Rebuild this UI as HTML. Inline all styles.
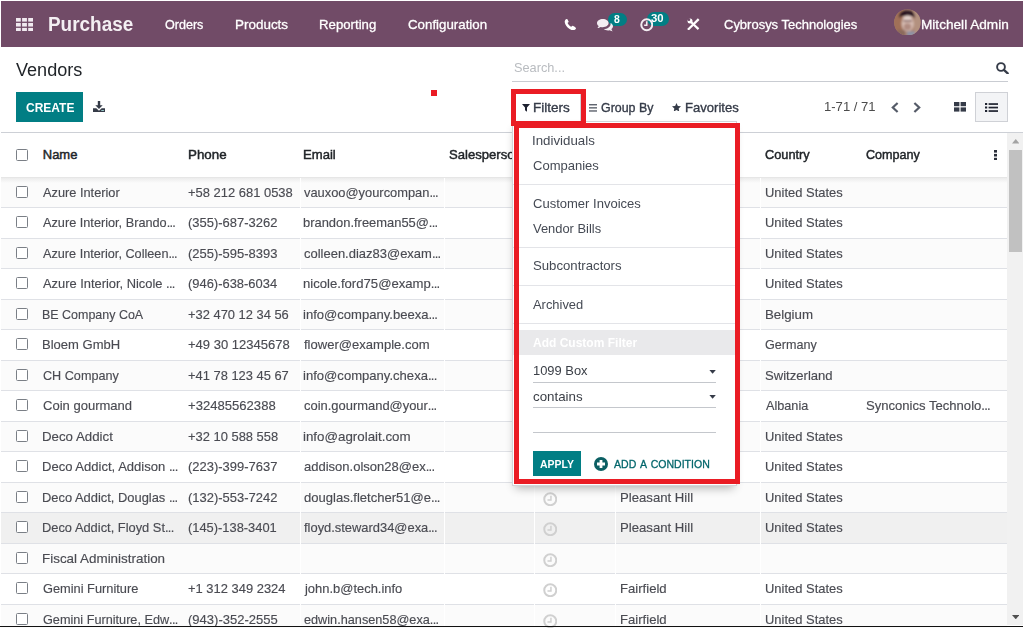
<!DOCTYPE html>
<html>
<head>
<meta charset="utf-8">
<title>Vendors</title>
<style>
*{box-sizing:border-box;margin:0;padding:0}
html,body{width:1024px;height:628px;overflow:hidden;background:#fff}
body{font-family:"Liberation Sans",sans-serif;font-size:13px;color:#4c4c4c;position:relative}
.t{position:absolute;transform-origin:0 0;white-space:nowrap;font-family:"Liberation Sans",sans-serif}
.a{position:absolute}
#nav{position:absolute;left:1px;top:1px;width:1021.5px;height:45.5px;background:#714b67}
.create{position:absolute;left:16px;top:92px;width:67px;height:30px;background:#017e84}
.sline{position:absolute;left:512px;top:81px;width:496px;height:1px;background:#c9ccd2}
.cpline{position:absolute;left:1px;top:132px;width:1022px;height:1px;background:#cdd0d6}
.hdr{position:absolute;left:1px;top:133px;width:1006px;height:45px;background:#fff;border-bottom:1px solid #e6e6e6}
.hshadow{position:absolute;left:1px;top:178px;width:1006px;height:5px;background:linear-gradient(#ececec,rgba(240,240,240,0));z-index:2}
.row{position:absolute;left:1px;width:1006px;border-bottom:1px solid #dfe1e6;background:#fff}
.row.odd{background:#fbfbfb}
.row.hov{background:#f0f0f0}
.cb{position:absolute;left:15px;top:8px;width:12.3px;height:12.3px;border:1.2px solid #7a7f86;border-radius:1.5px;background:#fff}
.clk{position:absolute;left:542.5px;top:8.5px;width:13.4px;height:13.4px;border:1.9px solid #cbcbcb;border-radius:50%}
.clk:after{content:"";position:absolute;left:1.6px;top:1.4px;width:3.6px;height:4px;border-right:1.6px solid #cbcbcb;border-bottom:1.6px solid #cbcbcb}
.vsep{position:absolute;top:178px;width:1px;height:448px;background:#fff;z-index:3}
#sb{position:absolute;left:1007px;top:133px;width:15.6px;height:491.6px;background:#f1f1f1;z-index:20}
#sb .thumb{position:absolute;left:2px;top:17px;width:12.6px;height:102px;background:#c1c1c1}
#botline{position:absolute;left:0;top:625.6px;width:1023px;height:1.4px;background:#111;z-index:30}
#dd{position:absolute;left:512px;top:120.6px;width:225px;height:365px;background:#fff;border:1px solid #d2d4d8;box-shadow:0 5px 9px -3px rgba(0,0,0,.3);z-index:4}
.sep{position:absolute;left:513px;width:223px;height:1px;background:#e3e4e8;z-index:5}
.uline{position:absolute;left:533px;width:183px;height:1px;background:#c4c7cc;z-index:5}
.red{position:absolute;border:5px solid #ea1c24;z-index:10}
</style>
</head>
<body>
<div id="nav"></div>
<!-- apps icon -->
<svg class="a" style="left:16px;top:17.5px;z-index:5" width="17" height="13.5" viewBox="0 0 17 13.5"><g fill="#f1eaf0"><rect x="0" y="0" width="4.8" height="3.6"/><rect x="6.1" y="0" width="4.8" height="3.6"/><rect x="12.2" y="0" width="4.8" height="3.6"/><rect x="0" y="4.95" width="4.8" height="3.6"/><rect x="6.1" y="4.95" width="4.8" height="3.6"/><rect x="12.2" y="4.95" width="4.8" height="3.6"/><rect x="0" y="9.9" width="4.8" height="3.6"/><rect x="6.1" y="9.9" width="4.8" height="3.6"/><rect x="12.2" y="9.9" width="4.8" height="3.6"/></g></svg>
<!-- phone -->
<svg class="a" style="left:564px;top:18.5px;z-index:5" width="12.5" height="11.5" viewBox="0 0 14 14"><path fill="#fff" d="M14 10.9c0 .3-.1.8-.2 1.100-.3.700-1.500 1.400-2.600 1.600C9 14 6.300 12.800 3.800 10.300 1.300 7.800 0 5 .3 2.800.5 1.700 1.200.5 1.900.2 2.300.1 2.700 0 3 0c.2 0 .4.200.5.400L5 3.100c.2.400-.3.900-.7 1.200-.4.300-.6.600-.4 1 .9 1.700 2.300 3.100 4 4 .4.200.7 0 1-.4.300-.4.800-.9 1.200-.7l2.700 1.500c.2.100.4.300.4.500z"/></svg>
<!-- comments -->
<svg class="a" style="left:597px;top:19px;z-index:5" width="16" height="12.5" viewBox="0 0 16 12.5"><g fill="#f3edf2"><path d="M5.800 0C2.600 0 0 1.900 0 4.200c0 1.100.6 2.200 1.700 2.900-.2.800-.7 1.500-1.300 2 .1 0 2-.1 3.300-1.100.7.200 1.400.3 2.100.3 3.200 0 5.800-1.900 5.800-4.200C11.600 1.900 9 0 5.800 0z"/><path d="M14.400 10c1-.7 1.600-1.600 1.600-2.700 0-1.400-1-2.600-2.500-3.300.1.300.1.600.1.900 0 2.800-3.100 5-6.900 5.200 1 .9 2.600 1.400 4.300 1.400.6 0 1.200-.1 1.800-.2 1.100.8 2.700 1.100 2.900 1.100-.6-.6-1.100-1.600-1.300-2.400z"/></g></svg>
<div class="a" style="left:607.5px;top:13px;width:19px;height:13px;border-radius:7px;background:#017e84"></div>
<!-- clock activity -->
<svg class="a" style="left:639.5px;top:18px;z-index:5" width="13.5" height="13.5" viewBox="0 0 13.5 13.5"><circle cx="6.750" cy="6.750" r="5.500" fill="none" stroke="#f3edf2" stroke-width="2"/><path d="M6.750 3.200v4h-2.600" fill="none" stroke="#f3edf2" stroke-width="1.600"/></svg>
<div class="a" style="left:646.5px;top:11.5px;width:22px;height:14px;border-radius:7px;background:#017e84"></div>
<!-- studio / tools -->
<svg class="a" style="left:686.500px;top:17.700px;z-index:5" width="13" height="12.500" viewBox="0 0 13 12.500"><g stroke="#fff" stroke-width="2.300" fill="none"><path d="M0.900 11.700L11.700 1.100"/><path d="M4 4L11.500 11.100" stroke-width="2.200"/></g><circle cx="3" cy="2.900" r="2.500" fill="#fff"/><circle cx="1.900" cy="1.700" r="1.350" fill="#714b67"/></svg>
<!-- avatar -->
<svg class="a" style="left:894.2px;top:8.700px;z-index:5" width="26.800" height="26.800" viewBox="0 0 27 27"><defs><clipPath id="av"><circle cx="13.500" cy="13.500" r="13.300"/></clipPath><filter id="avb" x="-20%" y="-20%" width="140%" height="140%"><feGaussianBlur stdDeviation="0.900"/></filter></defs><g clip-path="url(#av)"><rect width="27" height="27" fill="#a8806e"/><g filter="url(#avb)"><rect x="-2" y="-2" width="11" height="31" fill="#a07058"/><rect x="20" y="-2" width="9" height="31" fill="#b3917f"/><path d="M5 9C5 3 9 1 13 1.500 18 1 21.500 4 21 9.500L19 7 8 7z" fill="#2a1820"/><ellipse cx="13.800" cy="14.500" rx="6.200" ry="8.200" fill="#d6bcb2"/><ellipse cx="13.600" cy="18" rx="3.800" ry="3.600" fill="#b08c82"/><rect x="9.500" y="11.200" width="8.500" height="1.500" fill="#7a5a5a"/><ellipse cx="13.600" cy="9" rx="4" ry="2" fill="#e4d2cc"/><rect x="13" y="22.500" width="8" height="5" fill="#8f93a6"/><rect x="3" y="21" width="8" height="7" fill="#8a6a5c"/></g></g></svg>

<div class="create"></div>
<div class="a" style="left:431px;top:90px;width:6px;height:6px;background:#ea1c24"></div>
<!-- download -->
<svg class="a" style="left:93px;top:100.800px" width="12" height="11.200" viewBox="0 0 12 11.200"><g fill="#353b48"><path d="M4.800 0h2.400v4.200h2.500L6 8 2.300 4.200h2.500z"/><path d="M0 7.200h3.300L6 9.800l2.700-2.600H12v4H0z"/></g><rect x="8.300" y="9" width="2.600" height="1" fill="#9cc"/></svg>
<div class="sline"></div>
<!-- search icon -->
<svg class="a" style="left:996px;top:62.400px" width="12.600" height="12" viewBox="0 0 12.600 12"><circle cx="5" cy="5" r="3.900" fill="none" stroke="#353b48" stroke-width="1.900"/><path d="M7.900 7.900l3.800 3.500" stroke="#353b48" stroke-width="2.300" stroke-linecap="round"/></svg>
<!-- filters button border -->
<div class="a" style="left:513px;top:92px;width:68px;height:30px;border:1px solid #d2d4d8;border-bottom:none;background:#fff"></div>
<!-- filter icon -->
<svg class="a" style="left:522.200px;top:103.800px;z-index:5" width="8" height="7.800" viewBox="0 0 8 7.800"><path d="M0 0h8L5 3.400v4.400L3 6.200V3.400z" fill="#1d2130"/></svg>
<!-- bars -->
<svg class="a" style="left:588.500px;top:103.500px" width="8.500" height="8" viewBox="0 0 8.500 8"><g fill="#3a404d"><rect y="0.200" width="8.500" height="1.150"/><rect y="3.300" width="8.500" height="1.150"/><rect y="6.400" width="8.500" height="1.150"/></g></svg>
<!-- star -->
<svg class="a" style="left:672.300px;top:102.800px" width="9" height="8.600" viewBox="0 0 10 9.500"><path d="M5 0l1.500 3.200 3.500.4-2.600 2.400.7 3.500L5 7.800 1.900 9.500l.7-3.500L0 3.600l3.500-.4z" fill="#353b48"/></svg>
<!-- chevrons -->
<svg class="a" style="left:890.500px;top:101.500px" width="8" height="11" viewBox="0 0 8 11"><path d="M6.600 1L1.800 5.500 6.600 10" fill="none" stroke="#555b68" stroke-width="2.200"/></svg>
<svg class="a" style="left:912.500px;top:101.500px" width="8" height="11" viewBox="0 0 8 11"><path d="M1.400 1l4.800 4.500L1.400 10" fill="none" stroke="#555b68" stroke-width="2.200"/></svg>
<!-- kanban icon -->
<svg class="a" style="left:954px;top:102px" width="12" height="9.600" viewBox="0 0 12 9.600"><g fill="#353b48"><rect x="0" y="0" width="5.400" height="4.200"/><rect x="6.600" y="0" width="5.400" height="4.200"/><rect x="0" y="5.400" width="5.400" height="4.200"/><rect x="6.600" y="5.400" width="5.400" height="4.200"/></g></svg>
<!-- list button -->
<div class="a" style="left:975px;top:92px;width:33px;height:29.500px;background:#f3f4f6;border:1px solid #cfd1d6"></div>
<svg class="a" style="left:984.500px;top:102.500px" width="13.500" height="9" viewBox="0 0 13.500 9"><g fill="#1f2330"><rect x="0" y="0" width="2.200" height="2"/><rect x="3.600" y="0.200" width="9.900" height="1.700"/><rect x="0" y="3.500" width="2.200" height="2"/><rect x="3.600" y="3.700" width="9.900" height="1.700"/><rect x="0" y="7" width="2.200" height="2"/><rect x="3.600" y="7.200" width="9.900" height="1.700"/></g></svg>
<div class="cpline"></div>

<div class="hdr"><i class="cb" style="top:16px"></i></div>
<!-- kebab -->
<svg class="a" style="left:994px;top:150px;z-index:5" width="3.400" height="10.400" viewBox="0 0 3.400 10.400"><g fill="#2a2e3a"><rect y="0" width="3.400" height="2.600"/><rect y="3.900" width="3.400" height="2.600"/><rect y="7.800" width="3.400" height="2.600"/></g></svg>
<div class="row odd" style="top:178px;height:30px"><i class="cb"></i></div>
<div class="row" style="top:208px;height:31px"><i class="cb"></i></div>
<div class="row odd" style="top:239px;height:30px"><i class="cb"></i></div>
<div class="row" style="top:269px;height:31px"><i class="cb"></i></div>
<div class="row odd" style="top:300px;height:30px"><i class="cb"></i></div>
<div class="row" style="top:330px;height:31px"><i class="cb"></i></div>
<div class="row odd" style="top:361px;height:30px"><i class="cb"></i></div>
<div class="row" style="top:391px;height:31px"><i class="cb"></i></div>
<div class="row odd" style="top:422px;height:30px"><i class="cb"></i></div>
<div class="row" style="top:452px;height:31px"><i class="cb"></i></div>
<div class="row odd" style="top:483px;height:30px"><i class="cb"></i><svg class="a" style="left:541.6px;top:8.5px" width="14.5" height="14.5" viewBox="0 0 14.5 14.5"><circle cx="7.25" cy="7.25" r="6" fill="none" stroke="#d0d0d0" stroke-width="2"/><path d="M7.950 3.700v4.200h-3.500" fill="none" stroke="#d0d0d0" stroke-width="1.500"/></svg></div>
<div class="row hov" style="top:513px;height:31px"><i class="cb"></i><svg class="a" style="left:541.6px;top:8.5px" width="14.5" height="14.5" viewBox="0 0 14.5 14.5"><circle cx="7.25" cy="7.25" r="6" fill="none" stroke="#d0d0d0" stroke-width="2"/><path d="M7.950 3.700v4.200h-3.500" fill="none" stroke="#d0d0d0" stroke-width="1.500"/></svg></div>
<div class="row odd" style="top:544px;height:30px"><i class="cb"></i><svg class="a" style="left:541.6px;top:8.5px" width="14.5" height="14.5" viewBox="0 0 14.5 14.5"><circle cx="7.25" cy="7.25" r="6" fill="none" stroke="#d0d0d0" stroke-width="2"/><path d="M7.950 3.700v4.200h-3.500" fill="none" stroke="#d0d0d0" stroke-width="1.500"/></svg></div>
<div class="row" style="top:574px;height:31px"><i class="cb"></i><svg class="a" style="left:541.6px;top:8.5px" width="14.5" height="14.5" viewBox="0 0 14.5 14.5"><circle cx="7.25" cy="7.25" r="6" fill="none" stroke="#d0d0d0" stroke-width="2"/><path d="M7.950 3.700v4.200h-3.500" fill="none" stroke="#d0d0d0" stroke-width="1.500"/></svg></div>
<div class="row odd" style="top:605px;height:30px"><i class="cb"></i><svg class="a" style="left:541.6px;top:8.5px" width="14.5" height="14.5" viewBox="0 0 14.5 14.5"><circle cx="7.25" cy="7.25" r="6" fill="none" stroke="#d0d0d0" stroke-width="2"/><path d="M7.950 3.700v4.200h-3.500" fill="none" stroke="#d0d0d0" stroke-width="1.500"/></svg></div>
<div class="hshadow"></div>
<div class="vsep" style="left:299.500px"></div>
<div class="vsep" style="left:444px"></div>
<div class="vsep" style="left:534px"></div>
<div class="vsep" style="left:615px"></div>
<div class="vsep" style="left:760px"></div>

<div id="sb"><div class="thumb"></div>
<svg class="a" style="left:4.500px;top:6px" width="7.500" height="4.500" viewBox="0 0 7.500 4.500"><path d="M0 4.500L3.750 0 7.500 4.500z" fill="#a3a3a3"/></svg>
<svg class="a" style="left:4.800px;top:482px" width="7.500" height="4.300" viewBox="0 0 7.500 4.300"><path d="M0 0h7.500L3.750 4.300z" fill="#505050"/></svg>
</div>
<div id="botline"></div>

<div id="dd"></div>
<div class="sep" style="top:184px"></div>
<div class="sep" style="top:247px"></div>
<div class="sep" style="top:285px"></div>
<div class="sep" style="top:323px"></div>
<div class="a" style="left:513px;top:330px;width:223px;height:25px;background:#e9e9eb;z-index:5"></div>
<div class="uline" style="top:382px"></div>
<div class="uline" style="top:407px"></div>
<div class="uline" style="top:432px"></div>
<svg class="a" style="left:708.900px;top:369.900px;z-index:5" width="7.200" height="3.700" viewBox="0 0 7 4"><path d="M0 0h7L3.500 4z" fill="#353b48"/></svg>
<svg class="a" style="left:708.900px;top:394.900px;z-index:5" width="7.200" height="3.700" viewBox="0 0 7 4"><path d="M0 0h7L3.500 4z" fill="#353b48"/></svg>
<div class="a" style="left:533px;top:451px;width:48px;height:24.700px;background:#017e84;z-index:5"></div>
<svg class="a" style="left:593.600px;top:456.800px;z-index:5" width="14" height="14" viewBox="0 0 14 14"><circle cx="7" cy="7" r="7" fill="#0b5f63"/><path d="M7 3v8M3 7h8" stroke="#fff" stroke-width="2.800"/></svg>

<div class="red" style="left:511px;top:89px;width:75px;height:36.500px"></div>
<div class="red" style="left:514px;top:123px;width:226px;height:361px"></div>
<span class="t" style="left:48.32px;top:11.57px;font-size:20px;line-height:25px;color:#f4eff3;z-index:1;transform:scaleX(0.9462);font-weight:bold;">Purchase</span>
<span class="t" style="left:165.03px;top:15.82px;font-size:13.5px;line-height:17px;color:#ffffff;z-index:1;transform:scaleX(0.9309);-webkit-text-stroke:0.3px #fff;">Orders</span>
<span class="t" style="left:235.20px;top:15.82px;font-size:13.5px;line-height:17px;color:#ffffff;z-index:1;transform:scaleX(0.9962);-webkit-text-stroke:0.3px #fff;">Products</span>
<span class="t" style="left:319.32px;top:15.82px;font-size:13.5px;line-height:17px;color:#ffffff;z-index:1;transform:scaleX(0.9780);-webkit-text-stroke:0.3px #fff;">Reporting</span>
<span class="t" style="left:407.71px;top:15.82px;font-size:13.5px;line-height:17px;color:#ffffff;z-index:1;transform:scaleX(0.9848);-webkit-text-stroke:0.3px #fff;">Configuration</span>
<span class="t" style="left:724.02px;top:15.82px;font-size:13.5px;line-height:17px;color:#ffffff;z-index:1;transform:scaleX(0.9619);-webkit-text-stroke:0.3px #fff;">Cybrosys Technologies</span>
<span class="t" style="left:920.99px;top:15.82px;font-size:13.5px;line-height:17px;color:#ffffff;z-index:1;transform:scaleX(1.0088);-webkit-text-stroke:0.3px #fff;">Mitchell Admin</span>
<span class="t" style="left:614.34px;top:13.73px;font-size:10px;line-height:12px;color:#fff;z-index:1;transform:scaleX(1.0400);font-weight:bold;">8</span>
<span class="t" style="left:651.42px;top:12.73px;font-size:10px;line-height:12px;color:#fff;z-index:1;transform:scaleX(1.1333);font-weight:bold;">30</span>
<span class="t" style="left:16.25px;top:58.76px;font-size:18px;line-height:22px;color:#212529;z-index:1;transform:scaleX(1.0038);">Vendors</span>
<span class="t" style="left:25.54px;top:99.50px;font-size:13px;line-height:16px;color:#fff;z-index:1;transform:scaleX(0.9223);font-weight:bold;">CREATE</span>
<span class="t" style="left:513.76px;top:59.50px;font-size:13px;line-height:16px;color:#b9bcc0;z-index:1;transform:scaleX(0.9800);">Search...</span>
<span class="t" style="left:532.96px;top:99.50px;font-size:13px;line-height:16px;color:#353b48;z-index:1;transform:scaleX(1.0382);-webkit-text-stroke:0.35px #353b48;">Filters</span>
<span class="t" style="left:600.52px;top:99.50px;font-size:13px;line-height:16px;color:#353b48;z-index:1;transform:scaleX(0.9541);-webkit-text-stroke:0.35px #353b48;">Group By</span>
<span class="t" style="left:684.50px;top:99.50px;font-size:13px;line-height:16px;color:#353b48;z-index:1;transform:scaleX(1.0048);-webkit-text-stroke:0.35px #353b48;">Favorites</span>
<span class="t" style="left:823.99px;top:98.50px;font-size:13px;line-height:16px;color:#4c4c4c;z-index:1;transform:scaleX(1.0050);">1-71 / 71</span>
<span class="t" style="left:42.75px;top:146.50px;font-size:13px;line-height:16px;color:#212529;z-index:1;transform:scaleX(1.0000);-webkit-text-stroke:0.45px #212529;">Name</span>
<span class="t" style="left:187.73px;top:146.50px;font-size:13px;line-height:16px;color:#212529;z-index:1;transform:scaleX(1.0274);-webkit-text-stroke:0.45px #212529;">Phone</span>
<span class="t" style="left:303.24px;top:146.50px;font-size:13px;line-height:16px;color:#212529;z-index:1;transform:scaleX(1.0080);-webkit-text-stroke:0.45px #212529;">Email</span>
<span class="t" style="left:448.75px;top:146.50px;font-size:13px;line-height:16px;color:#212529;z-index:1;transform:scaleX(1.0070);-webkit-text-stroke:0.45px #212529;">Salesperson</span>
<span class="t" style="left:765.01px;top:146.50px;font-size:13px;line-height:16px;color:#212529;z-index:1;transform:scaleX(0.9834);-webkit-text-stroke:0.45px #212529;">Country</span>
<span class="t" style="left:866.02px;top:146.50px;font-size:13px;line-height:16px;color:#212529;z-index:1;transform:scaleX(0.9683);-webkit-text-stroke:0.45px #212529;">Company</span>
<span class="t" style="left:43.40px;top:184.50px;font-size:13px;line-height:16px;color:#4a4b52;z-index:1;transform:scaleX(0.9833);-webkit-text-stroke:0.15px #4a4b52;">Azure Interior</span>
<span class="t" style="left:188.10px;top:184.50px;font-size:13px;line-height:16px;color:#4a4b52;z-index:1;transform:scaleX(0.9957);-webkit-text-stroke:0.15px #4a4b52;">+58 212 681 0538</span>
<span class="t" style="left:304.00px;top:184.50px;font-size:13px;line-height:16px;color:#4a4b52;z-index:1;transform:scaleX(0.9904);-webkit-text-stroke:0.15px #4a4b52;">vauxoo@yourcompan<span style="letter-spacing:-0.75px">...</span></span>
<span class="t" style="left:764.60px;top:184.50px;font-size:13px;line-height:16px;color:#4a4b52;z-index:1;transform:scaleX(0.9954);-webkit-text-stroke:0.15px #4a4b52;">United States</span>
<span class="t" style="left:43.40px;top:214.50px;font-size:13px;line-height:16px;color:#4a4b52;z-index:1;transform:scaleX(0.9781);-webkit-text-stroke:0.15px #4a4b52;">Azure Interior, Brando<span style="letter-spacing:-0.75px">...</span></span>
<span class="t" style="left:187.85px;top:214.50px;font-size:13px;line-height:16px;color:#4a4b52;z-index:1;transform:scaleX(0.9972);-webkit-text-stroke:0.15px #4a4b52;">(355)-687-3262</span>
<span class="t" style="left:303.25px;top:214.50px;font-size:13px;line-height:16px;color:#4a4b52;z-index:1;transform:scaleX(0.9937);-webkit-text-stroke:0.15px #4a4b52;">brandon.freeman55@<span style="letter-spacing:-0.75px">...</span></span>
<span class="t" style="left:764.60px;top:214.50px;font-size:13px;line-height:16px;color:#4a4b52;z-index:1;transform:scaleX(0.9954);-webkit-text-stroke:0.15px #4a4b52;">United States</span>
<span class="t" style="left:43.40px;top:245.50px;font-size:13px;line-height:16px;color:#4a4b52;z-index:1;transform:scaleX(0.9752);-webkit-text-stroke:0.15px #4a4b52;">Azure Interior, Colleen<span style="letter-spacing:-0.75px">...</span></span>
<span class="t" style="left:187.85px;top:245.50px;font-size:13px;line-height:16px;color:#4a4b52;z-index:1;transform:scaleX(0.9972);-webkit-text-stroke:0.15px #4a4b52;">(255)-595-8393</span>
<span class="t" style="left:303.50px;top:245.50px;font-size:13px;line-height:16px;color:#4a4b52;z-index:1;transform:scaleX(0.9982);-webkit-text-stroke:0.15px #4a4b52;">colleen.diaz83@exam<span style="letter-spacing:-0.75px">...</span></span>
<span class="t" style="left:764.60px;top:245.50px;font-size:13px;line-height:16px;color:#4a4b52;z-index:1;transform:scaleX(0.9954);-webkit-text-stroke:0.15px #4a4b52;">United States</span>
<span class="t" style="left:43.40px;top:275.50px;font-size:13px;line-height:16px;color:#4a4b52;z-index:1;transform:scaleX(0.9902);-webkit-text-stroke:0.15px #4a4b52;">Azure Interior, Nicole <span style="letter-spacing:-0.75px">...</span></span>
<span class="t" style="left:187.85px;top:275.50px;font-size:13px;line-height:16px;color:#4a4b52;z-index:1;transform:scaleX(0.9944);-webkit-text-stroke:0.15px #4a4b52;">(946)-638-6034</span>
<span class="t" style="left:303.24px;top:275.50px;font-size:13px;line-height:16px;color:#4a4b52;z-index:1;transform:scaleX(1.0093);-webkit-text-stroke:0.15px #4a4b52;">nicole.ford75@examp<span style="letter-spacing:-0.75px">...</span></span>
<span class="t" style="left:764.60px;top:275.50px;font-size:13px;line-height:16px;color:#4a4b52;z-index:1;transform:scaleX(0.9954);-webkit-text-stroke:0.15px #4a4b52;">United States</span>
<span class="t" style="left:42.44px;top:306.50px;font-size:13px;line-height:16px;color:#4a4b52;z-index:1;transform:scaleX(0.9589);-webkit-text-stroke:0.15px #4a4b52;">BE Company CoA</span>
<span class="t" style="left:188.10px;top:306.50px;font-size:13px;line-height:16px;color:#4a4b52;z-index:1;transform:scaleX(0.9920);-webkit-text-stroke:0.15px #4a4b52;">+32 470 12 34 56</span>
<span class="t" style="left:303.25px;top:306.50px;font-size:13px;line-height:16px;color:#4a4b52;z-index:1;transform:scaleX(1.0045);-webkit-text-stroke:0.15px #4a4b52;">info@company.beexa<span style="letter-spacing:-0.75px">...</span></span>
<span class="t" style="left:764.58px;top:306.50px;font-size:13px;line-height:16px;color:#4a4b52;z-index:1;transform:scaleX(1.0232);-webkit-text-stroke:0.15px #4a4b52;">Belgium</span>
<span class="t" style="left:42.40px;top:336.50px;font-size:13px;line-height:16px;color:#4a4b52;z-index:1;transform:scaleX(1.0013);-webkit-text-stroke:0.15px #4a4b52;">Bloem GmbH</span>
<span class="t" style="left:188.10px;top:336.50px;font-size:13px;line-height:16px;color:#4a4b52;z-index:1;transform:scaleX(1.0015);-webkit-text-stroke:0.15px #4a4b52;">+49 30 12345678</span>
<span class="t" style="left:304.00px;top:336.50px;font-size:13px;line-height:16px;color:#4a4b52;z-index:1;transform:scaleX(1.0032);-webkit-text-stroke:0.15px #4a4b52;">flower@example.com</span>
<span class="t" style="left:765.12px;top:336.50px;font-size:13px;line-height:16px;color:#4a4b52;z-index:1;transform:scaleX(0.9679);-webkit-text-stroke:0.15px #4a4b52;">Germany</span>
<span class="t" style="left:42.91px;top:367.50px;font-size:13px;line-height:16px;color:#4a4b52;z-index:1;transform:scaleX(0.9716);-webkit-text-stroke:0.15px #4a4b52;">CH Company</span>
<span class="t" style="left:188.10px;top:367.50px;font-size:13px;line-height:16px;color:#4a4b52;z-index:1;transform:scaleX(0.9920);-webkit-text-stroke:0.15px #4a4b52;">+41 78 123 45 67</span>
<span class="t" style="left:303.25px;top:367.50px;font-size:13px;line-height:16px;color:#4a4b52;z-index:1;transform:scaleX(1.0057);-webkit-text-stroke:0.15px #4a4b52;">info@company.chexa<span style="letter-spacing:-0.75px">...</span></span>
<span class="t" style="left:765.10px;top:367.50px;font-size:13px;line-height:16px;color:#4a4b52;z-index:1;transform:scaleX(1.0061);-webkit-text-stroke:0.15px #4a4b52;">Switzerland</span>
<span class="t" style="left:42.90px;top:397.50px;font-size:13px;line-height:16px;color:#4a4b52;z-index:1;transform:scaleX(1.0017);-webkit-text-stroke:0.15px #4a4b52;">Coin gourmand</span>
<span class="t" style="left:188.10px;top:397.50px;font-size:13px;line-height:16px;color:#4a4b52;z-index:1;transform:scaleX(1.0064);-webkit-text-stroke:0.15px #4a4b52;">+32485562388</span>
<span class="t" style="left:303.50px;top:397.50px;font-size:13px;line-height:16px;color:#4a4b52;z-index:1;transform:scaleX(0.9951);-webkit-text-stroke:0.15px #4a4b52;">coin.gourmand@your<span style="letter-spacing:-0.75px">...</span></span>
<span class="t" style="left:765.60px;top:397.50px;font-size:13px;line-height:16px;color:#4a4b52;z-index:1;transform:scaleX(0.9747);-webkit-text-stroke:0.15px #4a4b52;">Albania</span>
<span class="t" style="left:865.50px;top:397.50px;font-size:13px;line-height:16px;color:#4a4b52;z-index:1;transform:scaleX(1.0057);-webkit-text-stroke:0.15px #4a4b52;">Synconics Technolo<span style="letter-spacing:-0.75px">...</span></span>
<span class="t" style="left:42.38px;top:428.50px;font-size:13px;line-height:16px;color:#4a4b52;z-index:1;transform:scaleX(1.0212);-webkit-text-stroke:0.15px #4a4b52;">Deco Addict</span>
<span class="t" style="left:188.10px;top:428.50px;font-size:13px;line-height:16px;color:#4a4b52;z-index:1;transform:scaleX(0.9939);-webkit-text-stroke:0.15px #4a4b52;">+32 10 588 558</span>
<span class="t" style="left:303.23px;top:428.50px;font-size:13px;line-height:16px;color:#4a4b52;z-index:1;transform:scaleX(1.0251);-webkit-text-stroke:0.15px #4a4b52;">info@agrolait.com</span>
<span class="t" style="left:764.60px;top:428.50px;font-size:13px;line-height:16px;color:#4a4b52;z-index:1;transform:scaleX(0.9954);-webkit-text-stroke:0.15px #4a4b52;">United States</span>
<span class="t" style="left:42.40px;top:458.50px;font-size:13px;line-height:16px;color:#4a4b52;z-index:1;transform:scaleX(1.0034);-webkit-text-stroke:0.15px #4a4b52;">Deco Addict, Addison <span style="letter-spacing:-0.75px">...</span></span>
<span class="t" style="left:187.85px;top:458.50px;font-size:13px;line-height:16px;color:#4a4b52;z-index:1;transform:scaleX(0.9972);-webkit-text-stroke:0.15px #4a4b52;">(223)-399-7637</span>
<span class="t" style="left:303.50px;top:458.50px;font-size:13px;line-height:16px;color:#4a4b52;z-index:1;transform:scaleX(1.0008);-webkit-text-stroke:0.15px #4a4b52;">addison.olson28@ex<span style="letter-spacing:-0.75px">...</span></span>
<span class="t" style="left:764.60px;top:458.50px;font-size:13px;line-height:16px;color:#4a4b52;z-index:1;transform:scaleX(0.9954);-webkit-text-stroke:0.15px #4a4b52;">United States</span>
<span class="t" style="left:42.41px;top:489.50px;font-size:13px;line-height:16px;color:#4a4b52;z-index:1;transform:scaleX(0.9922);-webkit-text-stroke:0.15px #4a4b52;">Deco Addict, Douglas <span style="letter-spacing:-0.75px">...</span></span>
<span class="t" style="left:187.85px;top:489.50px;font-size:13px;line-height:16px;color:#4a4b52;z-index:1;transform:scaleX(0.9972);-webkit-text-stroke:0.15px #4a4b52;">(132)-553-7242</span>
<span class="t" style="left:303.50px;top:489.50px;font-size:13px;line-height:16px;color:#4a4b52;z-index:1;transform:scaleX(1.0030);-webkit-text-stroke:0.15px #4a4b52;">douglas.fletcher51@e<span style="letter-spacing:-0.75px">...</span></span>
<span class="t" style="left:619.69px;top:489.50px;font-size:13px;line-height:16px;color:#4a4b52;z-index:1;transform:scaleX(1.0113);-webkit-text-stroke:0.15px #4a4b52;">Pleasant Hill</span>
<span class="t" style="left:764.60px;top:489.50px;font-size:13px;line-height:16px;color:#4a4b52;z-index:1;transform:scaleX(0.9954);-webkit-text-stroke:0.15px #4a4b52;">United States</span>
<span class="t" style="left:42.41px;top:519.50px;font-size:13px;line-height:16px;color:#4a4b52;z-index:1;transform:scaleX(0.9894);-webkit-text-stroke:0.15px #4a4b52;">Deco Addict, Floyd St<span style="letter-spacing:-0.75px">...</span></span>
<span class="t" style="left:187.86px;top:519.50px;font-size:13px;line-height:16px;color:#4a4b52;z-index:1;transform:scaleX(0.9904);-webkit-text-stroke:0.15px #4a4b52;">(145)-138-3401</span>
<span class="t" style="left:304.00px;top:519.50px;font-size:13px;line-height:16px;color:#4a4b52;z-index:1;transform:scaleX(0.9925);-webkit-text-stroke:0.15px #4a4b52;">floyd.steward34@exa<span style="letter-spacing:-0.75px">...</span></span>
<span class="t" style="left:619.69px;top:519.50px;font-size:13px;line-height:16px;color:#4a4b52;z-index:1;transform:scaleX(1.0113);-webkit-text-stroke:0.15px #4a4b52;">Pleasant Hill</span>
<span class="t" style="left:764.60px;top:519.50px;font-size:13px;line-height:16px;color:#4a4b52;z-index:1;transform:scaleX(0.9954);-webkit-text-stroke:0.15px #4a4b52;">United States</span>
<span class="t" style="left:42.37px;top:550.50px;font-size:13px;line-height:16px;color:#4a4b52;z-index:1;transform:scaleX(1.0323);-webkit-text-stroke:0.15px #4a4b52;">Fiscal Administration</span>
<span class="t" style="left:42.91px;top:580.50px;font-size:13px;line-height:16px;color:#4a4b52;z-index:1;transform:scaleX(0.9849);-webkit-text-stroke:0.15px #4a4b52;">Gemini Furniture</span>
<span class="t" style="left:188.10px;top:580.50px;font-size:13px;line-height:16px;color:#4a4b52;z-index:1;transform:scaleX(0.9954);-webkit-text-stroke:0.15px #4a4b52;">+1 312 349 2324</span>
<span class="t" style="left:304.50px;top:580.50px;font-size:13px;line-height:16px;color:#4a4b52;z-index:1;transform:scaleX(0.9954);-webkit-text-stroke:0.15px #4a4b52;">john.b@tech.info</span>
<span class="t" style="left:619.69px;top:580.50px;font-size:13px;line-height:16px;color:#4a4b52;z-index:1;transform:scaleX(1.0090);-webkit-text-stroke:0.15px #4a4b52;">Fairfield</span>
<span class="t" style="left:764.60px;top:580.50px;font-size:13px;line-height:16px;color:#4a4b52;z-index:1;transform:scaleX(0.9954);-webkit-text-stroke:0.15px #4a4b52;">United States</span>
<span class="t" style="left:42.91px;top:611.50px;font-size:13px;line-height:16px;color:#4a4b52;z-index:1;transform:scaleX(0.9752);-webkit-text-stroke:0.15px #4a4b52;">Gemini Furniture, Edw<span style="letter-spacing:-0.75px">...</span></span>
<span class="t" style="left:187.85px;top:611.50px;font-size:13px;line-height:16px;color:#4a4b52;z-index:1;transform:scaleX(1.0011);-webkit-text-stroke:0.15px #4a4b52;">(943)-352-2555</span>
<span class="t" style="left:303.51px;top:611.50px;font-size:13px;line-height:16px;color:#4a4b52;z-index:1;transform:scaleX(0.9766);-webkit-text-stroke:0.15px #4a4b52;">edwin.hansen58@exa<span style="letter-spacing:-0.75px">...</span></span>
<span class="t" style="left:619.69px;top:611.50px;font-size:13px;line-height:16px;color:#4a4b52;z-index:1;transform:scaleX(1.0090);-webkit-text-stroke:0.15px #4a4b52;">Fairfield</span>
<span class="t" style="left:764.60px;top:611.50px;font-size:13px;line-height:16px;color:#4a4b52;z-index:1;transform:scaleX(0.9954);-webkit-text-stroke:0.15px #4a4b52;">United States</span>
<span class="t" style="left:532.42px;top:133.00px;font-size:13px;line-height:16px;color:#454a54;z-index:6;transform:scaleX(1.0226);">Individuals</span>
<span class="t" style="left:532.85px;top:157.80px;font-size:13px;line-height:16px;color:#454a54;z-index:6;transform:scaleX(1.0016);">Companies</span>
<span class="t" style="left:532.95px;top:195.90px;font-size:13px;line-height:16px;color:#454a54;z-index:6;transform:scaleX(1.0019);">Customer Invoices</span>
<span class="t" style="left:533.45px;top:220.50px;font-size:13px;line-height:16px;color:#454a54;z-index:6;transform:scaleX(0.9926);">Vendor Bills</span>
<span class="t" style="left:532.84px;top:258.10px;font-size:13px;line-height:16px;color:#454a54;z-index:6;transform:scaleX(1.0133);">Subcontractors</span>
<span class="t" style="left:533.40px;top:296.60px;font-size:13px;line-height:16px;color:#454a54;z-index:6;transform:scaleX(0.9930);">Archived</span>
<span class="t" style="left:533.37px;top:334.50px;font-size:13px;line-height:16px;color:#ffffff;z-index:6;transform:scaleX(0.9238);font-weight:bold;">Add Custom Filter</span>
<span class="t" style="left:532.61px;top:363.30px;font-size:13px;line-height:16px;color:#3c4048;z-index:6;transform:scaleX(0.9935);">1099 Box</span>
<span class="t" style="left:532.89px;top:388.50px;font-size:13px;line-height:16px;color:#3c4048;z-index:6;transform:scaleX(1.0253);">contains</span>
<span class="t" style="left:539.77px;top:456.52px;font-size:11.5px;line-height:14px;color:#fff;z-index:6;transform:scaleX(0.9116);font-weight:bold;">APPLY</span>
<span class="t" style="left:613.60px;top:456.52px;font-size:11.5px;line-height:14px;color:#01666b;z-index:6;transform:scaleX(0.9157);-webkit-text-stroke:0.3px #01666b;word-spacing:1.5px;">ADD A CONDITION</span>
</body>
</html>
